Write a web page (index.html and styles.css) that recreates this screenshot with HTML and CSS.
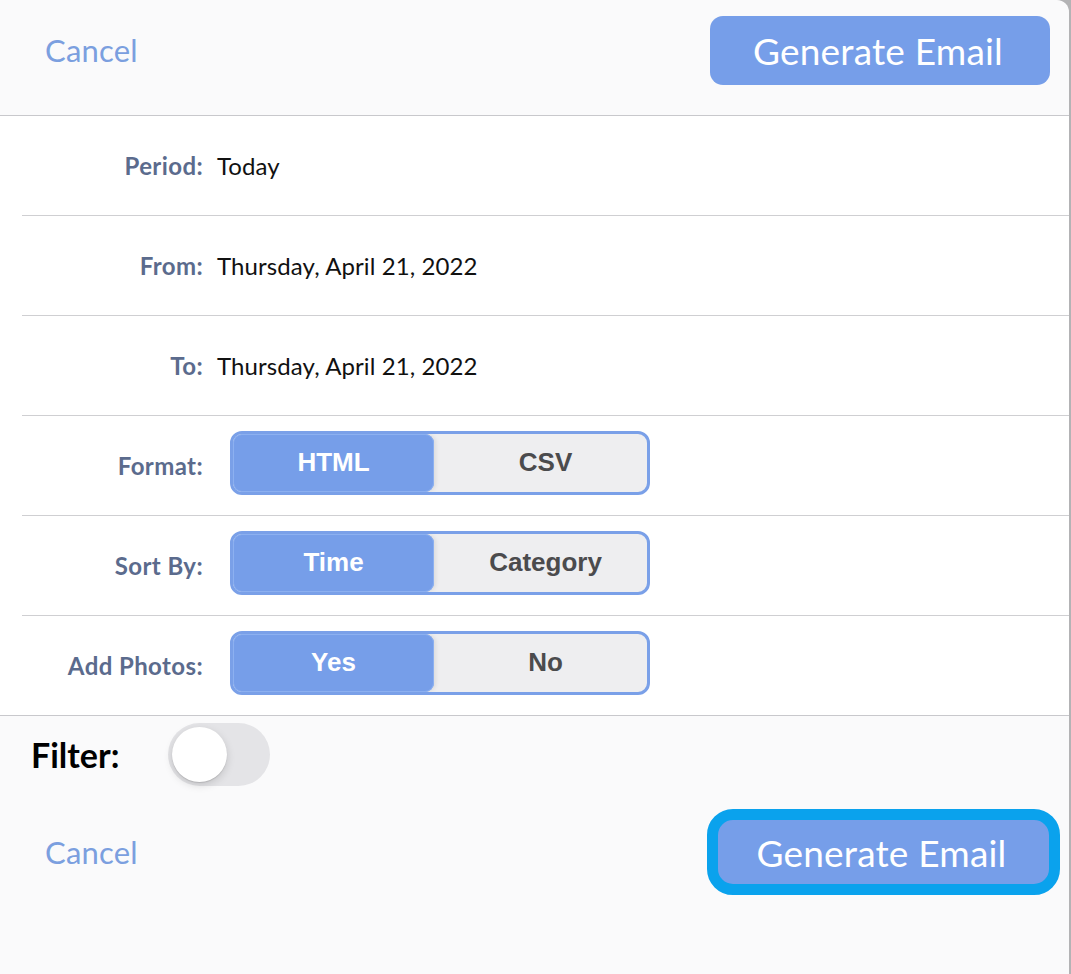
FILE: index.html
```html
<!DOCTYPE html>
<html lang="en">
<head>
<meta charset="utf-8">
<title>Generate Email</title>
<link rel="stylesheet" href="styles.css">
</head>
<body>
<div class="sheet">
  <header class="bar bar-top">
    <span class="link">Cancel</span>
    <button class="primary">Generate Email</button>
  </header>

  <div class="list">
    <div class="row">
      <span class="label">Period:</span>
      <span class="value">Today</span>
    </div>
    <div class="row">
      <span class="label">From:</span>
      <span class="value">Thursday, April 21, 2022</span>
    </div>
    <div class="row">
      <span class="label">To:</span>
      <span class="value">Thursday, April 21, 2022</span>
    </div>
    <div class="row">
      <span class="label">Format:</span>
      <div class="segmented">
        <span class="seg seg-on">HTML</span>
        <span class="seg">CSV</span>
      </div>
    </div>
    <div class="row">
      <span class="label">Sort By:</span>
      <div class="segmented">
        <span class="seg seg-on">Time</span>
        <span class="seg">Category</span>
      </div>
    </div>
    <div class="row row-last">
      <span class="label">Add Photos:</span>
      <div class="segmented">
        <span class="seg seg-on">Yes</span>
        <span class="seg">No</span>
      </div>
    </div>
  </div>

  <section class="footer">
    <div class="filter">
      <span class="filter-label">Filter:</span>
      <span class="switch"><span class="knob"></span></span>
    </div>
    <div class="bar bar-bottom">
      <span class="link">Cancel</span>
      <button class="primary primary-focus">Generate Email</button>
    </div>
  </section>
</div>
</body>
</html>
```

FILE: styles.css
```css
html {
  background: #b3b3b5;
}
body {
  margin: 0;
  font-family: "Lato", "Open Sans", sans-serif;
}
.sheet {
  width: 1069px;
  height: 974px;
  background: #fafafb;
  border-top-right-radius: 12px;
  overflow: hidden;
}
.bar {
  display: flex;
  justify-content: space-between;
  align-items: center;
}
.bar-top {
  height: 116px;
  padding: 16px 19px 0 45px;
  box-sizing: border-box;
  align-items: flex-start;
  border-bottom: 1px solid #c8c8cc;
}
.bar-top .link {
  line-height: 69px;
}
.link {
  font-size: 31px;
  color: #7b9fdf;
  letter-spacing: 0.2px;
}
.primary {
  width: 340px;
  height: 69px;
  border: none;
  border-radius: 13px;
  background: #769ee9;
  color: #ffffff;
  font-family: "Lato", "Open Sans", sans-serif;
  font-size: 37px;
  letter-spacing: 0.2px;
  padding: 0 4px 0 0;
}
.list {
  background: #ffffff;
  border-bottom: 1px solid #c8c8cc;
}
.row {
  margin-left: 22px;
  height: 99px;
  border-bottom: 1px solid #cfcfd2;
  display: flex;
  align-items: center;
  gap: 14px;
}
.row-last {
  border-bottom: none;
}
.label {
  width: 181px;
  text-align: right;
  font-size: 24px;
  font-weight: 700;
  color: #5b6b8d;
  letter-spacing: 0.4px;
}
.value {
  font-size: 24px;
  color: #111111;
  letter-spacing: 0.1px;
}
.segmented {
  margin-left: 13px;
  margin-top: -6px;
  width: 420px;
  height: 64px;
  box-sizing: border-box;
  border: 3px solid #7aa0e8;
  border-radius: 12px;
  background: #eeeef0;
  display: flex;
  overflow: hidden;
}
.seg {
  flex: 1;
  display: flex;
  align-items: center;
  justify-content: center;
  padding-left: 10px;
  font-family: "Liberation Sans", Arial, sans-serif;
  font-weight: 700;
  font-size: 26px;
  color: #4b4b4d;
}
.seg-on {
  flex: 0 0 201px;
  padding-left: 0;
  background: #769ee9;
  color: #ffffff;
  border-radius: 9px;
  box-shadow: inset 0 0 0 1px #8cb0f0, 2px 0 4px rgba(0, 0, 0, 0.08);
}
.footer {
  background: #fafafb;
}
.filter {
  display: flex;
  align-items: center;
  padding: 7px 0 0 31px;
  gap: 49px;
}
.filter-label {
  font-size: 34px;
  font-weight: 700;
  color: #000000;
}
.switch {
  width: 102px;
  height: 63px;
  border-radius: 32px;
  background: #e4e4e7;
  display: flex;
  align-items: center;
  padding-left: 4px;
  box-sizing: border-box;
}
.knob {
  width: 55px;
  height: 55px;
  border-radius: 50%;
  background: #ffffff;
  box-shadow: 0 3px 8px rgba(0, 0, 0, 0.15), 0 1px 1px rgba(0, 0, 0, 0.12);
}
.bar-bottom {
  padding: 23px 9px 0 45px;
}
.primary-focus {
  width: 353px;
  height: 86px;
  border: 11px solid #0aa2ed;
  border-radius: 26px;
}
```
